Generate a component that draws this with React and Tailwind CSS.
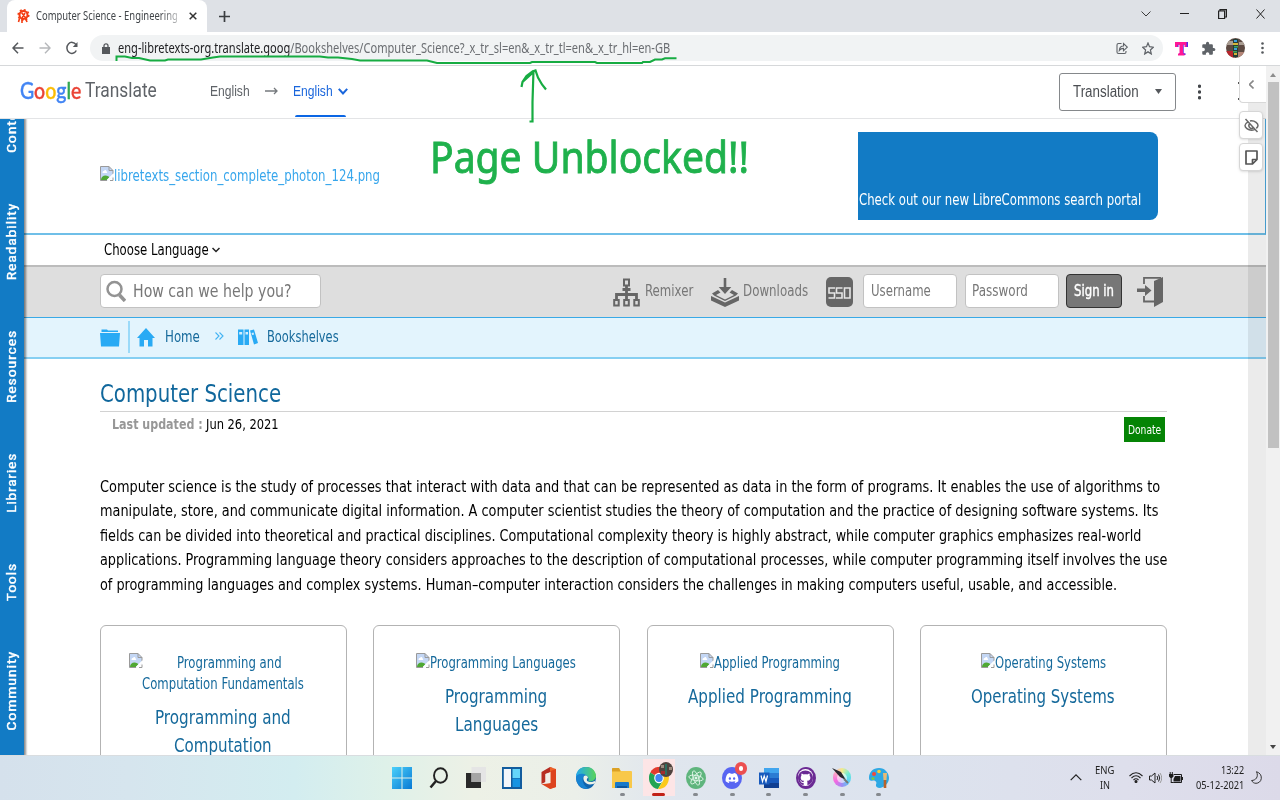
import React, { useLayoutEffect, useRef } from "react";
import { FaDiscord, FaGithub } from "react-icons/fa";
import { MdExtension } from "react-icons/md";

/* Text run condensed or widened to fill the width (or height) of its box. */
function Fit({ className = "", vertical = false, children }) {
  const box = useRef(null);
  const run = useRef(null);
  useLayoutEffect(() => {
    const b = box.current;
    const r = run.current;
    if (vertical) {
      r.style.transform = `scaleY(${b.clientHeight / r.offsetHeight})`;
    } else {
      r.style.transform = `scaleX(${b.clientWidth / r.offsetWidth})`;
    }
  }, [vertical]);
  return (
    <span ref={box} className={`block shrink-0 whitespace-nowrap ${className}`}>
      <span ref={run} className={`inline-block align-top ${vertical ? "origin-top" : "origin-left"}`}>
        {children}
      </span>
    </span>
  );
}

const tahoma = "font-['DejaVu_Sans_Condensed','DejaVu_Sans',sans-serif] [font-stretch:condensed]";
const segoe = "font-['Noto_Sans','Open_Sans',sans-serif]";

function Broken({ className = "" }) {
  return (
    <svg className={`h-[15px] w-[14px] shrink-0 ${className}`} viewBox="0 0 14 15" fill="none">
      <path d="M.5.5h8.500l4 4v5.500l-4.500 4.500H.5z" fill="#c4d7f5" />
      <path d="M2.500 7c0-2 1-2 1.500-2 .5-1.500 2.500-1 2.500.5 1 0 1 1.500 0 1.500z" fill="#fff" />
      <path d="M1 14c0-3 2-4.500 4.500-4.500 2 0 3.500 1 4 2L7 14z" fill="#4fa834" />
      <path d="M13 9V4.500L9 .5H.5v14h6.500M9 .5v4h4" stroke="#9a9a9a" />
      <path d="M14 8L7.500 14.500" stroke="#fff" strokeWidth="1.800" />
      <path d="M10 14.500h3v-3" stroke="#9a9a9a" />
    </svg>
  );
}

function TabStrip() {
  return (
    <div className="flex h-8 shrink-0 items-stretch bg-[#dee1e6] pl-[7px]">
      <div className="flex w-[200px] items-center rounded-t-lg bg-white pl-[10px]">
        <svg className="h-4 w-[13px]" viewBox="0 0 13 16" fill="none" stroke="#f33c11">
          <circle cx="6.500" cy="7" r="4" strokeWidth="2" />
          <circle cx="6.500" cy="7" r="5.300" strokeWidth="1.500" strokeDasharray="2 2.100" />
          <path d="M4.500 4.500l5 6.500M8 5l-3 5M8 9l2 5M2.500 10.500l-1 3.500M5 11v4" strokeWidth="1.600" />
        </svg>
        <Fit className={`ml-[6px] w-[142px] [mask-image:linear-gradient(90deg,#000_88%,rgba(0,0,0,0.3))] text-[12px] leading-[16px] text-[#42464a] ${segoe}`}>Computer Science - Engineering</Fit>
        <svg className="ml-[11px] h-2 w-2" viewBox="0 0 8 8" stroke="#333" strokeWidth="1.500"><path d="M.7.7l6.600 6.600M7.300.7L.7 7.300" /></svg>
      </div>
      <div className="flex flex-1 items-center pl-[12px]">
        <svg className="h-[11px] w-[11px]" viewBox="0 0 11 11" stroke="#3a3d40" strokeWidth="1.700"><path d="M0 5.500h11M5.500 0v11" /></svg>
      </div>
      <div className="flex items-start gap-[29px] pt-[9px] pr-[15px]">
        <svg className="h-[10px] w-[10px]" viewBox="0 0 10 10" fill="none" stroke="#3c3c3c"><path d="M.5 2.500l4.500 4.500 4.500-4.500" /></svg>
        <svg className="h-[10px] w-[9px]" viewBox="0 0 9 10" stroke="#222"><path d="M0 4.500h9" /></svg>
        <svg className="h-[10px] w-[9px]" viewBox="0 0 9 10" fill="none" stroke="#222" strokeWidth="1.200"><path d="M.6 2h6v7.500H.6zM2 2V.6h6.400V8H7" /></svg>
        <svg className="h-[10px] w-[9px]" viewBox="0 0 9 10" stroke="#222"><path d="M.5.5l8 9M8.500.5l-8 9" /></svg>
      </div>
    </div>
  );
}

function AddressBar() {
  return (
    <div className="flex h-[34px] shrink-0 items-center border-b border-[#d6d8da] bg-white pb-[1px] pl-[12px]">
      <svg className="h-3 w-3" viewBox="0 0 12 12" fill="none" stroke="#55585c" strokeWidth="1.500"><path d="M11.500 6H1M6 .8L1 6l5 5.200" /></svg>
      <svg className="ml-[15px] h-3 w-3" viewBox="0 0 12 12" fill="none" stroke="#b6b8bb" strokeWidth="1.400"><path d="M.5 6H11M6 .8L11 6l-5 5.200" /></svg>
      <svg className="ml-[15px] h-[14px] w-3" viewBox="0 0 12 14" fill="none" stroke="#55585c" strokeWidth="1.500"><path d="M10.300 9.500A5 5.500 0 1 1 10 3.700" /><path d="M11.500 1v5H6.800z" fill="#55585c" stroke="none" /></svg>
      <div className="ml-[12px] flex h-[26px] w-[1073px] items-center rounded-full bg-[#f1f3f4] pr-[9px] pl-[12px]">
        <svg className="h-[11px] w-2" viewBox="0 0 8 11"><path d="M0 4h8v7H0z" fill="#55585c" /><path d="M2 4.500V2.800a2 2 0 0 1 4 0v1.700" fill="none" stroke="#55585c" strokeWidth="1.300" /></svg>
        <Fit className={`ml-[8px] w-[552px] text-[13.500px] leading-[20px] text-[#6a6d71] ${segoe}`}>
          <span className="text-[#202124]">eng-libretexts-org.translate.goog</span>/Bookshelves/Computer_Science?_x_tr_sl=en&amp;_x_tr_tl=en&amp;_x_tr_hl=en-GB
        </Fit>
        <svg className="ml-auto h-[13px] w-3" viewBox="0 0 12 13" fill="none" stroke="#5f6368" strokeWidth="1.100"><path d="M5.500 1.500H2.500q-1.500 0-1.500 1.500v7q0 1.500 1.500 1.500h6q1.500 0 1.500-1.500V9" /><path d="M3.300 8.500C3.500 5.500 5 4 7.500 4V1.500l3.800 3.700-3.800 3.600V6.400C5.500 6.400 4.300 7 3.300 8.500z" /></svg>
        <svg className="ml-[14px] h-[13px] w-3" viewBox="0 0 12 12" preserveAspectRatio="none" fill="none" stroke="#5f6368" strokeWidth="1.200"><path d="M6 .9l1.500 3.500 3.800.4-2.900 2.500.9 3.700L6 9.100 2.700 11l.9-3.700L.7 4.800l3.800-.4z" /></svg>
      </div>
      <svg className="ml-[12px] h-[15px] w-[13px]" viewBox="0 0 13 15"><path d="M1 1h12v5h-2.500V3.500H8.700v8.700h1.800V14H4v-1.800h1.800V3.500H3.500V6H1z" fill="#5a24e8" /><path d="M0 1h11.500v5H9.500V3.700H8v8.800h1.500V14.500H3v-2h1.500V3.700H2.500V6H0z" fill="#ff1695" /></svg>
      <MdExtension className="ml-[13px] h-[15px] w-[15px] text-[#5f6368]" />
      <svg className="ml-[10px] h-5 w-[19px]" viewBox="0 0 19 20">
        <defs><clipPath id="avatar"><ellipse cx="9.500" cy="10" rx="9.500" ry="10" /></clipPath></defs>
        <g clipPath="url(#avatar)">
          <path d="M0 0h19v20H0z" fill="#5d4a42" /><path d="M0 3h7v4H0zM13 4h6v3h-6z" fill="#a99c91" /><path d="M0 13h8v7H0z" fill="#b9252d" /><path d="M12 14h7v6h-7z" fill="#b58678" />
          <path d="M7 1h5v18H7z" fill="#263c36" /><path d="M8 2h3v2H8zM8 10h3v2H8z" fill="#3c9fe0" /><path d="M7 5h5v2H7zM8 15h3v2H8z" fill="#d4b43a" /><path d="M8 8h4v1.500H8zM7 13h4v1.500H7z" fill="#3da55c" />
        </g>
      </svg>
      <svg className="ml-[16px] h-3 w-[3px]" viewBox="0 0 3 12" fill="#55585c"><circle cx="1.500" cy="1.500" r="1.300" /><circle cx="1.500" cy="6" r="1.300" /><circle cx="1.500" cy="10.500" r="1.300" /></svg>
    </div>
  );
}

function TranslateBar() {
  return (
    <div className="flex h-[53px] items-center border-b border-[#e3e4e6] bg-white pb-[2px] pl-5 font-['Liberation_Sans',Arial,sans-serif]">
      <Fit className="-mt-[2px] w-[61px] font-['Lato',sans-serif] text-[23px] leading-[28px] font-medium [-webkit-text-stroke:0.4px]">
        <span className="text-[#4285f4]">G</span><span className="text-[#ea4335]">o</span><span className="text-[#fbbc05]">o</span><span className="text-[#4285f4]">g</span><span className="text-[#34a853]">l</span><span className="text-[#ea4335]">e</span>
      </Fit>
      <Fit className="-mt-[2px] ml-[4px] w-[72px] font-['Roboto',sans-serif] text-[20.500px] leading-[28px] text-[#5f6368]">Translate</Fit>
      <Fit className="ml-[53px] w-[40px] text-[14.500px] leading-[20px] text-[#5f6368]">English</Fit>
      <svg className="ml-[15px] h-2 w-[13px]" viewBox="0 0 13 8" fill="none" stroke="#75797d" strokeWidth="1.300"><path d="M0 4h12M9 1l3 3-3 3" /></svg>
      <div className="ml-[15px] flex h-[52px] items-center">
        <div className="relative flex h-full items-center">
          <Fit className="w-[40px] text-[14.500px] leading-[20px] text-[#1a66dc]">English</Fit>
          <svg className="ml-[5px] h-[7px] w-[10px]" viewBox="0 0 10 7" fill="none" stroke="#1a66dc" strokeWidth="2"><path d="M.8.8L5 5.500 9.200.8" /></svg>
          <div className="absolute bottom-0 left-[2px] h-[2px] w-[51px] rounded-t bg-[#0b66e4]" />
        </div>
      </div>
      <div className="mt-px ml-auto flex h-[38px] w-[117px] items-center rounded-[3px] border border-[#85888b] pl-[13px]">
        <Fit className="w-[66px] text-[16px] leading-[20px] text-[#4b4e52]">Translation</Fit>
        <svg className="ml-[16px] h-[5px] w-[7px]" viewBox="0 0 7 5" fill="#55585c"><path d="M0 0h7L3.500 5z" /></svg>
      </div>
      <svg className="mt-px mr-[65px] ml-[22px] h-4 w-[3px] shrink-0" viewBox="0 0 3 16" fill="#44474b"><circle cx="1.500" cy="2.200" r="1.700" /><circle cx="1.500" cy="8" r="1.700" /><circle cx="1.500" cy="13.800" r="1.700" /></svg>
    </div>
  );
}

function SideRail() {
  const label = "[writing-mode:vertical-rl]";
  return (
    <div className="flex w-6 shrink-0 justify-center overflow-hidden bg-[#127bc5] shadow-[1px_0_2px_1px_rgba(0,0,0,0.45)]">
      <div className="flex flex-col font-['Roboto',sans-serif] text-[13px] leading-[14px] tracking-[0.6px] text-white [-webkit-text-stroke:0.35px_#fff]">
        <Fit vertical className={`-mt-[29px] h-[63px] ${label}`}><span className="inline-block rotate-180">Contents</span></Fit>
        <Fit vertical className={`mt-[50px] h-[77px] ${label}`}><span className="inline-block rotate-180">Readability</span></Fit>
        <Fit vertical className={`mt-[50px] h-[73px] ${label}`}><span className="inline-block rotate-180">Resources</span></Fit>
        <Fit vertical className={`mt-[50px] h-[60px] ${label}`}><span className="inline-block rotate-180">Libraries</span></Fit>
        <Fit vertical className={`mt-[50px] h-[38px] ${label}`}><span className="inline-block rotate-180">Tools</span></Fit>
        <Fit vertical className={`mt-[50px] h-[80px] ${label}`}><span className="inline-block rotate-180">Community</span></Fit>
      </div>
    </div>
  );
}

const field = "flex h-[34px] shrink-0 items-center rounded-[4px] border border-[#c2c2c2] bg-white";

function SearchRow() {
  return (
    <div className="flex h-[53px] items-center border-t-2 border-b border-t-[#bcbcbc] border-b-[#39a9e6] bg-[#dedede] pb-[3px] pl-[76px]">
      <div className={`w-[221px] pl-[5px] ${field}`}>
        <svg className="h-[22px] w-5" viewBox="0 0 20 22" fill="none" stroke="#939393"><circle cx="8.500" cy="9" r="7" strokeWidth="2.500" /><path d="M13.500 15l5.500 6" strokeWidth="3.500" /></svg>
        <Fit className="ml-[7px] w-[159px] text-[17.500px] leading-[22px] text-[#777]">How can we help you?</Fit>
      </div>
      <svg className="mt-[4px] ml-[292px] h-[29px] w-[27px] shrink-0" viewBox="0 0 27 29" fill="none" stroke="#666" strokeWidth="2"><path d="M11 1.500h5v6h-5zM1.200 22h4.500v5.500H1.200zM11.200 22h4.600v5.500h-4.600zM21.300 22h4.500v5.500h-4.500z" /><path d="M13.500 8v13M3.500 21v-4.500h20V21" strokeWidth="2.800" /><path d="M9.500 11.500h8" strokeWidth="3" /></svg>
      <Fit className="ml-[5px] w-[48px] text-[15px] leading-[20px] text-[#777]">Remixer</Fit>
      <svg className="mt-[4px] ml-[18px] h-[29px] w-[28px] shrink-0" viewBox="0 0 28 29" fill="#666"><path d="M12.700 0h2.600v9h5L14 16 7.700 9h5z" /><path d="M0 18l14 6.500L28 18v4.500L14 29 0 22.500zM1 15.500l6-3.500 2.500 2.500L5 17l9 4.500 9-4.500-4.500-2.500L21 12l6 3.500-2 2-11 5.500L3 17.500z" /></svg>
      <Fit className="ml-[4px] w-[65px] text-[15px] leading-[20px] text-[#777]">Downloads</Fit>
      <div className="mt-[3px] ml-[18px] flex h-[30px] w-[27px] shrink-0 items-center justify-center rounded-[5px] bg-[#666]">
        <svg className="mt-px h-3 w-[23px]" viewBox="0 0 23 12" fill="none" stroke="#e6e6e6" strokeWidth="1.600"><path d="M7 1H1v5h5.500v5H.5M14.500 1h-6v5H14v5H8M16.500 1H22v10h-5.500z" /></svg>
      </div>
      <div className={`ml-[10px] w-[94px] pl-[7px] ${field}`}><Fit className="w-[60px] text-[15px] leading-[20px] text-[#777]">Username</Fit></div>
      <div className={`ml-[8px] w-[94px] pl-[6px] ${field}`}><Fit className="w-[56px] text-[15px] leading-[20px] text-[#777]">Password</Fit></div>
      <div className="ml-[7px] flex h-[34px] w-[56px] shrink-0 items-center justify-center rounded-[4px] border border-[#333] bg-[#777]"><Fit className="w-[40px] text-[15px] leading-[20px] text-white [-webkit-text-stroke:0.4px_#fff]">Sign in</Fit></div>
      <svg className="mt-[2px] ml-[15px] h-[31px] w-[26px] shrink-0" viewBox="0 0 26 31" fill="#666"><path d="M17 5l9-4v25l-9 5z" /><path d="M7 8V1.800h17M7 20v5.500h10" fill="none" stroke="#666" strokeWidth="1.800" /><path d="M0 12.500h8V9l6.500 5.500L8 20v-4H0z" /></svg>
    </div>
  );
}

function Breadcrumb() {
  return (
    <div className="flex h-[41px] items-center border-b-2 border-[#86cff2] bg-[#e3f4fd] pb-[1px] pl-[76px]">
      <svg className="h-[19px] w-5" viewBox="0 0 20 19" fill="#29aaf4"><path d="M1.500 3V1.500h5.500l1 1h10V4H1.500zM0 5h20l-1 13.500H1z" /></svg>
      <div className="ml-2 h-8 w-[2px] bg-[#9bdaf9]" />
      <svg className="ml-[7px] h-[19px] w-[18px]" viewBox="0 0 18 19" fill="#29aaf4"><path d="M9 0l9 10h-2.500v8.500H11V12H7v6.500H2.500V10H0z" /></svg>
      <Fit className="-mt-px ml-[10px] w-[35px] text-[15px] leading-[20px] text-[#15699b]">Home</Fit>
      <svg className="-mt-[2px] ml-[15px] h-2 w-[9px]" viewBox="0 0 9 8" fill="none" stroke="#42b3f3" strokeWidth="1.100"><path d="M.5.5L4 4 .5 7.500M4.500.5L8 4 4.500 7.500" /></svg>
      <svg className="ml-[14px] h-4 w-5" viewBox="0 0 20 16"><path d="M0 .5h5.500V16H0zM6.500.5H11V16H6.500zM12 1.500l4-1 4 13.500-4 1.500z" fill="#29aaf4" /><path d="M1.200 3h3v2.500h-3zM7.500 3h2.500v2.500H7.500zM13.500 4l2-.6.6 2-2 .6z" fill="#d5effd" /></svg>
      <Fit className="-mt-px ml-[9px] w-[72px] text-[15px] leading-[20px] text-[#15699b]">Bookshelves</Fit>
    </div>
  );
}

const cardClass = "flex h-[140px] w-[247px] shrink-0 flex-col items-center rounded-[6px] border border-[#b3b3b3] pt-[27px] pr-[1px] text-[#15699b]";
const altText = "text-[15px] leading-[21px]";
const cardTitle = "text-[19px] leading-[27.500px]";

function Cards() {
  return (
    <div className="mt-[28px] flex gap-x-[26.500px]">
      <div className={cardClass}>
        <div className="flex w-[187px] items-start pr-[3px]"><Broken /><Fit className={`ml-[34px] w-[105px] ${altText}`}>Programming and</Fit></div>
        <Fit className={`w-[162px] ${altText}`}>Computation Fundamentals</Fit>
        <Fit className={`mt-[9px] w-[136px] ${cardTitle}`}>Programming and</Fit>
        <Fit className={`w-[98px] ${cardTitle}`}>Computation</Fit>
      </div>
      <div className={cardClass}>
        <div className="flex"><Broken /><Fit className={`w-[146px] ${altText}`}>Programming Languages</Fit></div>
        <Fit className={`mt-[9px] w-[102px] ${cardTitle}`}>Programming</Fit>
        <Fit className={`w-[83px] ${cardTitle}`}>Languages</Fit>
      </div>
      <div className={cardClass}>
        <div className="flex"><Broken /><Fit className={`w-[126px] ${altText}`}>Applied Programming</Fit></div>
        <Fit className={`mt-[9px] w-[164px] ${cardTitle}`}>Applied Programming</Fit>
      </div>
      <div className={cardClass}>
        <div className="flex"><Broken /><Fit className={`w-[111px] ${altText}`}>Operating Systems</Fit></div>
        <Fit className={`mt-[9px] w-[144px] ${cardTitle}`}>Operating Systems</Fit>
      </div>
    </div>
  );
}

function LibrePage() {
  return (
    <div className={`flex min-h-0 flex-1 overflow-hidden bg-white ${tahoma}`}>
      <div className="z-10 flex"><SideRail /></div>
      <div className="min-w-0 flex-1">
        <div className="flex h-[116px] items-start border-r border-b-2 border-r-[#4ba9de] border-b-[#6fbfe8] pl-[76px]">
          <div className="mt-[47px] flex"><Broken /><Fit className="w-[266px] text-[15px] leading-[21px] text-[#37a6ec]">libretexts_section_complete_photon_124.png</Fit></div>
          <div className="mt-[13px] ml-[478px] flex h-[88px] w-[300px] items-end rounded-r-[8px] bg-[#127bc5] pb-[9px] pl-px">
            <Fit className="w-[282px] text-[15px] leading-[21px] text-white">Check out our new LibreCommons search portal</Fit>
          </div>
        </div>
        <div className="flex h-[30px] items-center pl-[80px]">
          <Fit className="w-[105px] text-[15px] leading-[20px] text-black">Choose Language</Fit>
          <svg className="ml-[3px] h-[6px] w-2" viewBox="0 0 8 6" fill="none" stroke="#222" strokeWidth="1.500"><path d="M.5 1L4 4.500 7.500 1" /></svg>
        </div>
        <SearchRow />
        <Breadcrumb />
        <div className="pl-[75.500px]">
          <div className="w-[1067px] border-b border-[#d2d2d2] pt-[19px] pb-[1px]"><Fit className="w-[181px] text-[24.500px] leading-[32px] text-[#10679c]">Computer Science</Fit></div>
          <div className="flex h-[34px] w-[1065px] items-start">
            <Fit className="mt-[2px] ml-[12px] w-[91px] text-[14.500px] leading-[20px] font-bold text-[#979797]">Last updated :</Fit>
            <Fit className="mt-[2px] ml-[3px] w-[73px] text-[14.500px] leading-[20px] text-black">Jun 26, 2021</Fit>
            <div className="mt-[5px] ml-auto flex h-[25px] w-[41px] items-center justify-center bg-[#058405]"><Fit className="w-[33px] text-[12px] leading-[16px] text-white">Donate</Fit></div>
          </div>
          <div className="mt-[29px] text-[16px] leading-[24.450px] text-black">
            <Fit className="w-[1060px]">Computer science is the study of processes that interact with data and that can be represented as data in the form of programs. It enables the use of algorithms to</Fit>
            <Fit className="w-[1058px]">manipulate, store, and communicate digital information. A computer scientist studies the theory of computation and the practice of designing software systems. Its</Fit>
            <Fit className="w-[1041px]">fields can be divided into theoretical and practical disciplines. Computational complexity theory is highly abstract, while computer graphics emphasizes real-world</Fit>
            <Fit className="w-[1067px]">applications. Programming language theory considers approaches to the description of computational processes, while computer programming itself involves the use</Fit>
            <Fit className="w-[1017px]">of programming languages and complex systems. Human–computer interaction considers the challenges in making computers useful, usable, and accessible.</Fit>
          </div>
          <Cards />
        </div>
      </div>
    </div>
  );
}

function ExtensionRail() {
  return (
    <div className="absolute top-0 right-0 z-20 flex h-full w-[28px] flex-col items-end">
      <div className="absolute top-[36px] right-0 bottom-0 w-[18px] bg-black/8" />
      <div className="absolute top-[16px] left-0 flex h-[18px] w-[2px] flex-col justify-between"><span className="h-[2px] bg-[#555]" /><span className="h-[2px] bg-[#555]" /></div>
      <div className="relative flex h-[37px] w-[27px] items-center justify-center rounded-bl-[4px] border-b border-l border-[#d8d8d8] bg-white pr-[3px]">
        <svg className="h-[9px] w-[5px]" viewBox="0 0 5 9" fill="none" stroke="#888" strokeWidth="1.600"><path d="M4.500.5l-4 4 4 4" /></svg>
      </div>
      <div className="relative mt-[8px] mr-[3px] flex h-[28px] w-[24px] items-center justify-center rounded-[4px] border border-[#d6d6d6] bg-white shadow-sm">
        <svg className="h-[15px] w-[15px]" viewBox="0 0 15 15" fill="none" stroke="#686868" strokeWidth="1.500"><path d="M4 3.800C2 5 1 6.300 1 7.500c0 2 3 4.700 6.500 4.700 1 0 2-.2 3-.6M6 3c.5-.2 1-.2 1.500-.2C11 2.800 14 5.500 14 7.500c0 1-.7 2-1.700 2.900M1.500 1l12 13M5.500 6a2.700 2.700 0 0 0 3.500 4" /></svg>
      </div>
      <div className="relative mt-[4px] mr-[3px] flex h-[28px] w-[24px] items-center justify-center rounded-[4px] border border-[#d6d6d6] bg-white shadow-sm">
        <svg className="h-[15px] w-[13px]" viewBox="0 0 13 15" fill="none" stroke="#555" strokeWidth="1.700" strokeLinejoin="round"><path d="M12 9.500V1H1v13h6.500zM7.500 14V9.500H12" /></svg>
      </div>
    </div>
  );
}

function Annotation() {
  return (
    <div className="pointer-events-none absolute top-0 left-0 z-30 h-[200px] w-[800px]">
      <svg className="absolute top-0 left-0 h-[130px] w-[700px]" viewBox="0 0 700 130" fill="none" stroke="#17ac42" strokeWidth="2">
        <path d="M116.500 61V56.500H125L132 58H139L150 60.500H165L168 59.500H201L213 57.500L220 56.500H320L328 57.500H338L352 59L360 60.500H427L437 63H530L532 62H595L597 63H642L643 62H650L655 59.500H662L665 58.300H676.500" />
        <path d="M529.500 121.500h3V102l1-32M521.500 87l1-5 4-6 6-4.500 3-1 2.500 7 4 7 4 5M522.500 82l10-9" strokeWidth="2.200" />
      </svg>
      <Fit className="absolute top-[126px] left-[430px] w-[319px] font-['Noto_Sans','Open_Sans',sans-serif] text-[43.500px] leading-[60px] text-[#1fb14c] [-webkit-text-stroke:0.9px_#1fb14c]">Page Unblocked!!</Fit>
    </div>
  );
}

function TaskIcon({ children, dot = true, active = false }) {
  return (
    <div className={`relative flex h-[37px] w-[36.670px] shrink-0 items-center justify-center ${active ? "bg-[linear-gradient(90deg,transparent_2px,#fde5e6_2px,#fde5e6_34px,transparent_34px)]" : ""}`}>
      {children}
      {dot && <span className={`absolute bottom-0 rounded-full ${active ? "h-[3px] w-[13px] bg-[#c22017]" : "h-[3px] w-[5px] bg-[#85898e]"}`} />}
    </div>
  );
}

function Taskbar() {
  const ic = "h-[22px] w-5";
  return (
    <div className="flex h-[45px] shrink-0 items-center border-t border-[#d9dde0] bg-[linear-gradient(90deg,#d5e1ec_0%,#d6e5ee_10%,#d3edf0_23%,#def1e9_30%,#edf1e6_37%,#ebefe9_45%,#e0e6ee_52%,#dce3ee_70%,#dedfec_88%,#dcdae9_100%)] pb-px">
      <div className="flex w-[1070px] shrink-0 pl-[384px]">
        <TaskIcon dot={false}><svg className={ic} viewBox="0 0 20 22"><defs><linearGradient id="win" x2="1" y2="1"><stop stopColor="#4bd0fa" /><stop offset="1" stopColor="#0879d4" /></linearGradient></defs><path d="M0 0h9.500v10.500H0zM10.500 0H20v10.500h-9.500zM0 11.500h9.500V22H0zM10.500 11.500H20V22h-9.500z" fill="url(#win)" /></svg></TaskIcon>
        <TaskIcon dot={false}><svg className={ic} viewBox="0 0 20 22" fill="none" stroke="#222" strokeWidth="1.900"><ellipse cx="11.500" cy="8.500" rx="6.500" ry="7.300" /><path d="M7 14l-5.500 6.500" strokeWidth="2.500" /></svg></TaskIcon>
        <TaskIcon dot={false}><svg className={ic} viewBox="0 0 20 22"><path d="M0 6h15v15H0z" fill="#292929" /><path d="M5.500 0H20v15H5.500z" fill="#e5e5e5" /><path d="M5.500 6H15v9H5.500z" fill="#a5a5a5" /></svg></TaskIcon>
        <TaskIcon dot={false}><svg className={ic} viewBox="0 0 20 22"><path d="M0 0h20v22H0z" fill="#125c9e" /><path d="M1.800 2H9v18H1.800z" fill="#f3f6fa" /><path d="M10.500 2H18v9h-7.500z" fill="#65d5fa" /><path d="M10.500 11.500H18V20h-7.500z" fill="#1693e2" /></svg></TaskIcon>
        <TaskIcon dot={false}><svg className={ic} viewBox="0 0 20 22"><path d="M2.500 5L11 0l2.500 1v4L6.500 7v8.500l-4 1.500z" fill="#b72d22" /><path d="M11 0l6 2v18l-6 2V17z" fill="#ed6228" /><path d="M2.500 17l9-1V4L17 2v18l-6 2z" fill="#dd431e" /><path d="M6.500 7l5-2v11l-9 1 4-2z" fill="#f1eee8" /></svg></TaskIcon>
        <TaskIcon dot={false}><svg className={ic} viewBox="0 0 20 22"><defs><linearGradient id="ed" x2="1"><stop stopColor="#22a7ef" /><stop offset="1" stopColor="#59d45a" /></linearGradient></defs><ellipse cx="10" cy="11" rx="10" ry="11" fill="#1064ad" /><path d="M0 10C0 4 4 0 10 0c7 0 10 5 10 9s-4 6-8 5.500c1-1 1-4-1-5.500C7 6 2 7 0 10z" fill="url(#ed)" /><path d="M0 10c2-4 7-4 10-2-3 0-4 4-3 7 1 4 4 6 6 6.500C5 23 0 17 0 10z" fill="#1783d2" /><path d="M12 14.500c-2-1-1-3 0-4 0-1-2-3-4-1.500-2 3 1 8.500 6 8.500 3 0 4-1 5-1.500l.5-2.500c-2 1.500-5 2-7.500 1z" fill="#eef1e9" /></svg></TaskIcon>
        <TaskIcon><svg className={ic} viewBox="0 0 20 22"><path d="M0 2q0-1 1-1h6l2 3h10q1 0 1 1v16H0z" fill="#f8c84a" /><path d="M0 2q0-1 1-1h6l1.500 3.500H0z" fill="#dba126" /><path d="M3 16q0-1 1-1h12q1 0 1 1v5H3z" fill="#1979c9" /><path d="M5 19h10v2H5z" fill="#10579d" /></svg></TaskIcon>
        <TaskIcon active>
          <svg className={ic} viewBox="0 0 20 22"><path d="M10 11L1.300 5.500A10 11 0 0 1 18.700 5.500L19 7z" fill="#e33b2e" /><path d="M10 11L1.300 5.500A10 11 0 0 0 9 22l5-8.500z" fill="#23a455" /><path d="M10 11l4 3-5 8a10 11 0 0 0 10.200-15H10z" fill="#fcca1c" /><ellipse cx="10" cy="11" rx="4.800" ry="5.200" fill="#fff" /><ellipse cx="10" cy="11" rx="3.700" ry="4.100" fill="#4285f4" /></svg>
          <svg className="absolute top-[3px] right-[4px] h-[15px] w-[14px]" viewBox="0 0 14 15"><ellipse cx="7" cy="7.500" rx="7" ry="7.500" fill="#50433e" /><path d="M2 3h3v3H2zM10 5h3v3h-3z" fill="#9c8a7f" /><path d="M2 9h4v3H2z" fill="#a42b2d" /><path d="M6 2h2v11H6z" fill="#2c6e60" /></svg>
        </TaskIcon>
        <TaskIcon><svg className={ic} viewBox="0 0 20 22" fill="none" stroke="#e3f6ea" strokeWidth=".9"><ellipse cx="10" cy="11" rx="10" ry="11" fill="#5fb57d" stroke="none" /><ellipse cx="10" cy="11" rx="2.600" ry="7.500" transform="rotate(-20 10 11)" /><ellipse cx="10" cy="11" rx="2.600" ry="7.500" transform="rotate(40 10 11)" /><ellipse cx="10" cy="11" rx="2.600" ry="7.200" transform="rotate(100 10 11)" /><circle cx="10" cy="11" r="1.100" fill="#fff" /></svg></TaskIcon>
        <TaskIcon>
          <span className="flex h-[22px] w-5 items-center justify-center rounded-[50%] bg-[#5865f2]"><FaDiscord className="h-[14px] w-[14px] text-white" /></span>
          <span className="absolute top-[3px] right-[4px] h-[13px] w-[12px] rounded-full border-[4px] border-[#ec4f50] bg-white" />
        </TaskIcon>
        <TaskIcon><svg className={ic} viewBox="0 0 20 22"><path d="M5 1h15v5H5z" fill="#41a5ee" /><path d="M5 6h15v5H5z" fill="#2b7cd3" /><path d="M5 11h15v5H5z" fill="#185abd" /><path d="M5 16h15v5H5z" fill="#103f91" /><path d="M0 5.500h10.500v12H0z" fill="#185abd" /><path d="M2 8.500l1.500 6 1.700-5.500L7 14.500l1.500-6" fill="none" stroke="#fff" strokeWidth="1.200" /></svg></TaskIcon>
        <TaskIcon><span className="flex h-[22px] w-5 items-center justify-center rounded-[50%] bg-[#6b2a94]"><span className="flex h-[17px] w-[15px] items-center justify-center rounded-full bg-white"><FaGithub className="h-[16px] w-[15px] text-[#6b2a94]" /></span></span></TaskIcon>
        <TaskIcon>
          <span className="relative h-[19px] w-[18px] rounded-full bg-[conic-gradient(#f4ea8d,#70ebd5,#5ad0f7,#9d8df4,#f568e0,#f9a3c7,#f4ea8d)]">
            <svg className="absolute -top-[1px] -left-[1px] h-5 w-5" viewBox="0 0 20 20"><circle cx="10" cy="11" r="5" fill="#fff" opacity=".6" /><path d="M0 1l9 4 5 8-6-3z" fill="#27272d" /><path d="M12 12l4 4" stroke="#777" strokeWidth="2" /></svg>
          </span>
        </TaskIcon>
        <TaskIcon><svg className={ic} viewBox="0 0 20 22"><path d="M10 1C4 1 0 5 0 11c0 3 2 3 4 2.500 3 0 4 2 3 4-.5 2 1 3.500 4 3.500 5-1 9-5 9-10S16 1 10 1z" fill="#2da8e4" /><circle cx="5" cy="7" r="2" fill="#f04a3b" /><circle cx="10" cy="4.500" r="1.800" fill="#f7cf3a" /><circle cx="4" cy="11.500" r="1.600" fill="#74c94a" /><path d="M14 6h4l-.5 7h-3z" fill="#e8bb75" /><path d="M14.700 13h2.600v8h-2.600z" fill="#b8632b" /></svg></TaskIcon>
      </div>
      <svg className="h-[7px] w-3 shrink-0" viewBox="0 0 12 7" fill="none" stroke="#222" strokeWidth="1.200"><path d="M.7 6.200L6 .9l5.300 5.300" /></svg>
      <div className={`ml-[13px] flex flex-col items-center text-[11px] leading-[14.500px] text-[#222] ${segoe}`}><Fit className="w-[19px]">ENG</Fit><Fit className="w-[10px]">IN</Fit></div>
      <svg className="ml-[15px] h-[11px] w-[14px] shrink-0" viewBox="0 0 14 11" fill="none" stroke="#222" strokeWidth="1.100"><path d="M.5 4Q7-2.500 13.500 4M2.500 6Q7 1.500 11.500 6M4.500 8Q7 5.500 9.500 8" /><circle cx="7" cy="9.500" r="1" fill="#222" /></svg>
      <svg className="ml-[6px] h-3 w-[13px] shrink-0" viewBox="0 0 13 12" fill="none" stroke="#222"><path d="M.5 4h2L6 1v10L2.500 8h-2zM8 4q1.500 2 0 4M9.500 2.500q2.500 3.500 0 7" /><path d="M11 1q3.500 5 0 10" stroke="#999" /></svg>
      <svg className="ml-[7px] h-3 w-[14px] shrink-0" viewBox="0 0 14 12"><path d="M5 2.500h7.500v8H4.500" fill="none" stroke="#1d1d1d" /><path d="M6 4h5.500v5.500H4.500V7zM13 5h1v3h-1z" fill="#1d1d1d" /><path d="M0 2h4.500v2.500L3 6H1.500L0 4.500zM.7 0h1v2h-1zM2.800 0h1v2h-1zM1.700 6h1v4h2v1h-3z" fill="#1d1d1d" /></svg>
      <div className={`ml-[13px] flex flex-col items-end text-[11px] leading-[14.500px] text-[#222] ${segoe}`}><Fit className="w-[23px]">13:22</Fit><Fit className="w-[48px]">05-12-2021</Fit></div>
      <svg className="ml-[7px] h-[13px] w-[11px] shrink-0" viewBox="0 0 11 13" fill="none" stroke="#333"><path d="M5.500.7C9 2 10.500 4 10.300 7.500 10 10.500 7.500 12.300 5 12.300c-2 0-3.500-1-4.400-2.800C4.500 9.500 8 6 5.500.7z" /></svg>
    </div>
  );
}

export default function App() {
  return (
    <div className="relative flex h-[800px] w-[1280px] flex-col overflow-hidden bg-white">
      <TabStrip />
      <AddressBar />
      <div className="flex min-h-0 flex-1">
        <div className="relative flex w-[1266px] flex-col">
          <TranslateBar />
          <LibrePage />
          <ExtensionRail />
        </div>
        <div className="flex w-[14px] flex-col items-center bg-[#f1f1f1]">
          <svg className="mt-[7px] h-[4px] w-[6px]" viewBox="0 0 6 4" fill="#8c8c8c"><path d="M0 4h6L3 0z" /></svg>
          <div className="mt-[5px] h-[366px] w-[11px] bg-[#c1c1c1]" />
          <svg className="mt-auto mb-[6px] h-[4px] w-[6px]" viewBox="0 0 6 4" fill="#444"><path d="M0 0h6L3 4z" /></svg>
        </div>
      </div>
      <Taskbar />
      <Annotation />
    </div>
  );
}
